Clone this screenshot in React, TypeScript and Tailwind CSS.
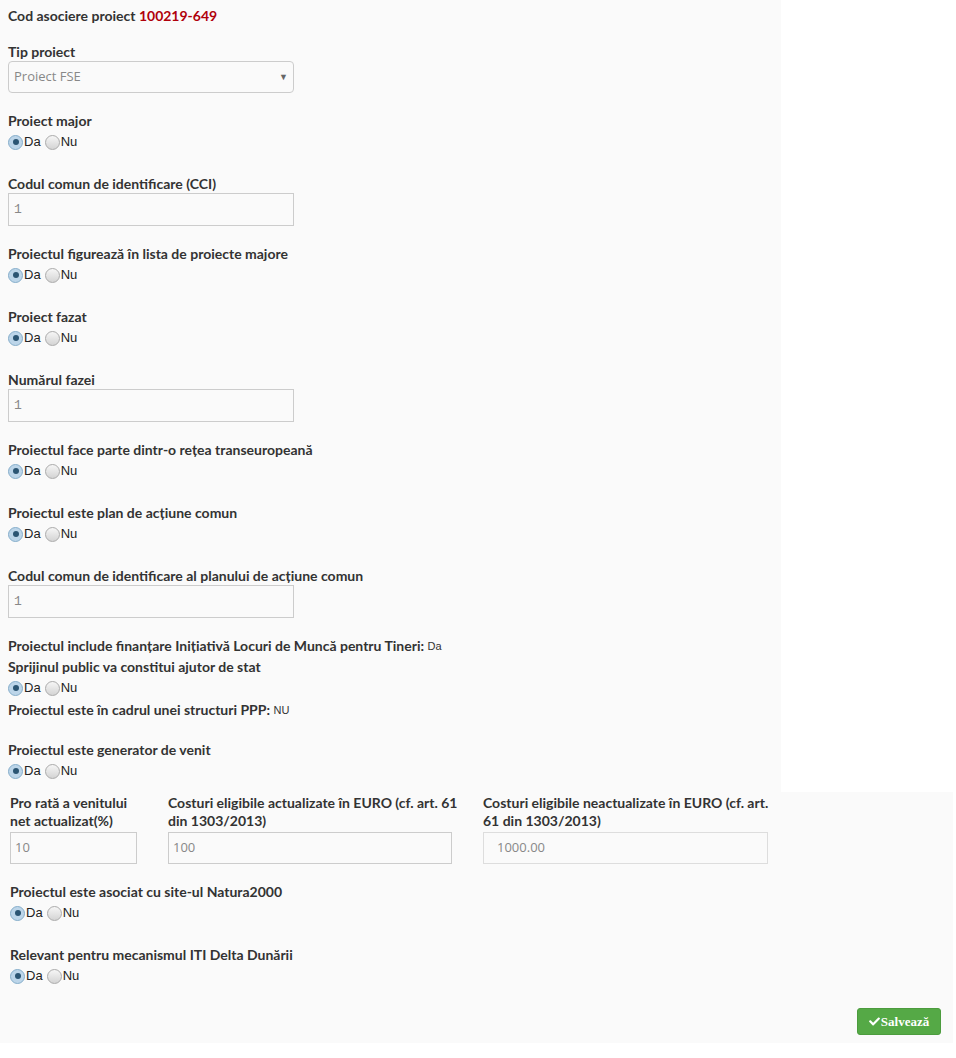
import { FaCheck } from "react-icons/fa";

const label = "block text-[14px] font-bold leading-[20px] text-[#333]";
const inputBox = "w-[286px] h-[33px] border border-[#ccc] bg-[#fafafa] px-[5px] flex items-center text-[13px] text-[#888] font-['Liberation_Mono',monospace]";

function Radio({ checked }: { checked?: boolean }) {
  return checked ? (
    <span className="inline-flex w-[15px] h-[15px] rounded-full border border-[#86aecb] bg-[#bcd5e9] items-center justify-center">
      <span className="w-[6px] h-[6px] rounded-full bg-[#2b5573]" />
    </span>
  ) : (
    <span className="inline-block w-[15px] h-[15px] rounded-full border border-[#ababab] bg-gradient-to-b from-[#f6f6f6] to-[#d4d4d4]" />
  );
}

function YesNo({ className = "mb-[22px]" }: { className?: string }) {
  return (
    <div className={`h-[21px] flex items-center pt-[1px] text-[13px] text-[#222] font-['Liberation_Sans',sans-serif] ${className}`}>
      <Radio checked />
      <span className="ml-[1px]">Da</span>
      <span className="ml-[4px] flex items-center"><Radio /></span>
      <span className="ml-[1px]">Nu</span>
    </div>
  );
}

function RadioGroup({ title }: { title: string }) {
  return (
    <div>
      <span className={label}>{title}</span>
      <YesNo />
    </div>
  );
}

function InputGroup({ title, value }: { title: string; value: string }) {
  return (
    <div className="mb-[18px]">
      <span className="block text-[14px] font-bold leading-[19px] text-[#333]">{title}</span>
      <div className={inputBox}>{value}</div>
    </div>
  );
}

export default function App() {
  return (
    <div className="min-h-[1058px] bg-white font-['Lato',sans-serif]">
      <div className="w-[781px] bg-[#fafafa] pl-[8px] pt-[6px] pb-[11px]">
        <div className={`${label} mb-[16px]`}>
          Cod asociere proiect <span className="text-[#b0000b]">100219-649</span>
        </div>

        <div className="mb-[18px]">
          <span className="block text-[14px] font-bold leading-[19px] text-[#333]">Tip proiect</span>
          <div className="w-[286px] h-[32px] border border-[#ccc] rounded-[4px] bg-[#fafafa] pl-[5px] pr-[5px] flex items-center justify-between text-[13px] text-[#888] font-['Open_Sans',sans-serif]">
            <span>Proiect FSE</span>
            <span className="text-[9px] text-[#666]">▼</span>
          </div>
        </div>

        <RadioGroup title="Proiect major" />
        <InputGroup title="Codul comun de identificare (CCI)" value="1" />
        <RadioGroup title="Proiectul figurează în lista de proiecte majore" />
        <RadioGroup title="Proiect fazat" />
        <InputGroup title="Numărul fazei" value="1" />
        <RadioGroup title="Proiectul face parte dintr-o rețea transeuropeană" />
        <RadioGroup title="Proiectul este plan de acțiune comun" />
        <InputGroup title="Codul comun de identificare al planului de acțiune comun" value="1" />

        <div className={label}>
          Proiectul include finanțare Inițiativă Locuri de Muncă pentru Tineri:{" "}
          <span className="font-normal text-[11px] align-top font-['Liberation_Sans',sans-serif]">Da</span>
        </div>
        <span className={`${label} mt-[1px]`}>Sprijinul public va constitui ajutor de stat</span>
        <YesNo className="mb-[2px]" />
        <div className={`${label} mb-[20px]`}>
          Proiectul este în cadrul unei structuri PPP:{" "}
          <span className="font-normal text-[11px] align-top font-['Liberation_Sans',sans-serif]">NU</span>
        </div>
        <span className={label}>Proiectul este generator de venit</span>
        <YesNo className="mb-0" />
      </div>

      <div className="w-[953px] bg-[#fafafa] pl-[10px] pt-[2px] pb-[6px]">
        <div className="flex gap-[31px] mb-[18px]">
          <div className="w-[127px]">
            <span className="block whitespace-nowrap text-[14px] font-bold leading-[18px] text-[#333] mb-[2px]">
              Pro rată a venitului<br />net actualizat(%)
            </span>
            <div className="h-[32px] border border-[#ccc] px-[4px] flex items-center text-[13px] text-[#888] font-['Open_Sans',sans-serif]">10</div>
          </div>
          <div className="w-[284px]">
            <span className="block whitespace-nowrap text-[14px] font-bold leading-[18px] text-[#333] mb-[2px]">
              Costuri eligibile actualizate în EURO (cf. art. 61<br />din 1303/2013)
            </span>
            <div className="h-[32px] border border-[#ccc] px-[4px] flex items-center text-[13px] text-[#888] font-['Open_Sans',sans-serif]">100</div>
          </div>
          <div className="w-[285px]">
            <span className="block whitespace-nowrap text-[14px] font-bold leading-[18px] text-[#333] mb-[2px]">
              Costuri eligibile neactualizate în EURO (cf. art.<br />61 din 1303/2013)
            </span>
            <div className="h-[32px] border border-[#ddd] px-[13px] flex items-center text-[13px] text-[#888] font-['Open_Sans',sans-serif]">1000.00</div>
          </div>
        </div>

        <RadioGroup title="Proiectul este asociat cu site-ul Natura2000" />
        <span className={label}>Relevant pentru mecanismul ITI Delta Dunării</span>
        <YesNo className="mb-[22px]" />

        <div className="flex justify-end pr-[12px] pb-[2px]">
          <button className="w-[84px] h-[27px] rounded-[3px] bg-[#55a946] border border-[#4c9c3e] text-white text-[13px] font-bold font-['Liberation_Serif',serif] flex items-center justify-center gap-[1px]">
            <FaCheck className="w-[11px] h-[11px]" />
            Salvează
          </button>
        </div>
      </div>
    </div>
  );
}
